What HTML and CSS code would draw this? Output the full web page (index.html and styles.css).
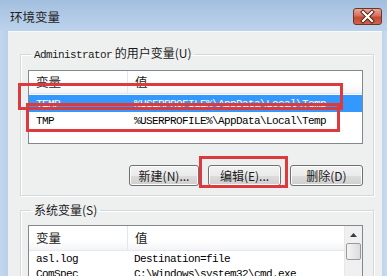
FILE: index.html
```html
<!DOCTYPE html>
<html lang="zh">
<head>
    <meta charset="UTF-8" />
    <title>环境变量</title>
    <link rel="stylesheet" href="styles.css">
</head>
<body>
    <div class="okno">
        <div class="pasek">
            <span class="tytul">环境变量</span>
            <span class="zamknij">
                <svg width="29" height="17" viewBox="0 0 29 17">
                    <path d="M10 4 L19 13 M19 4 L10 13" stroke="#4a1d16" stroke-width="4" stroke-linecap="square"/>
                    <path d="M10 4 L19 13 M19 4 L10 13" stroke="#ffffff" stroke-width="2.2" stroke-linecap="square"/>
                </svg>
            </span>
        </div>

        <div class="klient">
            <fieldset class="grupa grupa-user">
                <legend><span class="mono">Administrator</span> 的用户变量(U)</legend>
                <div class="lista lista-user">
                    <div class="wiersz naglowek">
                        <div class="kol1">变量</div>
                        <div class="kol2">值</div>
                    </div>
                    <div class="wiersz dane zaznaczony">
                        <div class="kol1 mono">TEMP</div>
                        <div class="kol2 mono">%USERPROFILE%\AppData\Local\Temp</div>
                    </div>
                    <div class="wiersz dane">
                        <div class="kol1 mono">TMP</div>
                        <div class="kol2 mono">%USERPROFILE%\AppData\Local\Temp</div>
                    </div>
                </div>
                <div class="przyciski">
                    <button class="przycisk p-nowy">新建(N)...</button>
                    <button class="przycisk p-edytuj">编辑(E)...</button>
                    <button class="przycisk p-usun">删除(D)</button>
                </div>
            </fieldset>

            <fieldset class="grupa grupa-sys">
                <legend>系统变量(S)</legend>
                <div class="lista lista-sys">
                    <div class="tresc">
                        <div class="wiersz naglowek">
                            <div class="kol1">变量</div>
                            <div class="kol2">值</div>
                        </div>
                        <div class="wiersz dane">
                            <div class="kol1 mono">asl.log</div>
                            <div class="kol2 mono">Destination=file</div>
                        </div>
                        <div class="wiersz dane">
                            <div class="kol1 mono">ComSpec</div>
                            <div class="kol2 mono">C:\Windows\system32\cmd.exe</div>
                        </div>
                    </div>
                    <div class="suwak">
                        <div class="strzalka">
                            <svg width="7" height="4" viewBox="0 0 7 4"><path d="M0 4 L3.5 0 L7 4 Z" fill="#3b3b3b"/></svg>
                        </div>
                        <div class="uchwyt"></div>
                    </div>
                </div>
            </fieldset>
        </div>

        <!-- czerwone ramki -->
        <div class="ramka ramka-1"></div>
        <div class="ramka ramka-2"></div>
        <div class="ramka ramka-3"></div>
    </div>
</body>
</html>
```

FILE: styles.css
```css
body {
    margin: 0;
    font-family: "Noto Sans CJK SC", sans-serif;
    font-size: 12px;
    color: #1a1a1a;
    background-color: #b9d1ea;
}

.okno {
    position: relative;
    width: 387px;
    height: 276px;
    overflow: hidden;
    background: linear-gradient(to right, #c3d7ee 0, #b9d0ea 8px, #b9d0ea 379px, #c8dbef 387px);
}

.pasek {
    height: 31px;
    position: relative;
    background: linear-gradient(to bottom, #a3bfdf 0, #b4cce7 20px, #bdd3ec 31px);
}

.tytul {
    position: absolute;
    left: 10px;
    top: 8px;
    font-size: 12.5px;
    line-height: 17px;
    color: #1e1e1e;
}

.zamknij {
    position: absolute;
    left: 353px;
    top: 8px;
    width: 29px;
    height: 17px;
    box-sizing: border-box;
    border: 1px solid #6e3429;
    border-radius: 3px;
    background: linear-gradient(to bottom, #e8a898 0, #d5705d 45%, #c34a32 55%, #d0634a 100%);
    display: flex;
    align-items: center;
    justify-content: center;
}

.zamknij svg {
    margin: -1px;
}

.klient {
    margin: 0 5px 0 8px;
    height: 245px;
    background-color: #eef0f0;
    padding-top: 13px;
    box-sizing: border-box;
    border-top: 1px solid #f8fafc;
}

.mono {
    font-family: "Liberation Mono", monospace;
    font-size: 11px;
    letter-spacing: -0.6px;
}

.grupa {
    margin: 0 8px 0 12px;
    padding: 0 10px 9px 7px;
    border: 1px solid #d5d9dc;
    box-shadow: inset 1px 1px 0 #ffffff, 1px 1px 0 #ffffff;
    min-width: 0;
}

.grupa legend {
    padding: 0 3px;
    margin-left: 3px;
    line-height: 16px;
    color: #1a1a1a;
}

.grupa-user legend {
    margin-top: -1px;
}

.grupa-sys {
    margin-top: 6px;
}

.lista {
    margin-top: 7px;
    border: 1px solid #828790;
    background-color: #ffffff;
}

.lista-user {
    height: 72px;
}

.lista-sys {
    height: 60px;
    display: flex;
}

.tresc {
    flex: 1;
}

.wiersz {
    display: flex;
    align-items: center;
}

.naglowek {
    height: 22px;
    line-height: 22px;
    font-size: 12.5px;
    background: linear-gradient(to bottom, #ffffff 0, #ffffff 60%, #f3f4f6 100%);
    border-bottom: 1px solid #e5e8ec;
}

.lista-sys .naglowek {
    height: 24px;
    line-height: 24px;
}

.kol1 {
    width: 91px;
    padding-left: 7px;
    flex-shrink: 0;
}

.naglowek .kol1 {
    border-right: 1px solid #e3e6ea;
}

.kol2 {
    padding-left: 7px;
    white-space: nowrap;
}

.dane {
    height: 17px;
    color: #000000;
}

.lista-sys .dane {
    height: 15px;
}

.lista-user .naglowek {
    margin-bottom: 1px;
}

.zaznaczony {
    background-color: #3399ff;
    color: #ffffff;
}

.suwak {
    width: 17px;
    background-color: #f0f0f0;
    border-left: 1px solid #e8e8e8;
    display: flex;
    flex-direction: column;
    align-items: center;
}

.strzalka {
    height: 17px;
    width: 100%;
    display: flex;
    align-items: center;
    justify-content: center;
}

.uchwyt {
    width: 15px;
    height: 17px;
    box-sizing: border-box;
    border: 1px solid #9a9a9a;
    border-radius: 2px;
    background: linear-gradient(to right, #f4f4f4, #dcdcdc);
}

.przyciski {
    display: flex;
    justify-content: flex-end;
    gap: 9px;
    margin-top: 21px;
}

.przycisk {
    height: 21px;
    padding: 0;
    font-family: "Noto Sans CJK SC", sans-serif;
    font-size: 12px;
    color: #1a1a1a;
    border: 1px solid #707070;
    border-radius: 3px;
    background: linear-gradient(to bottom, #f2f2f2 0, #ebebeb 50%, #dddddd 51%, #cfcfcf 100%);
    box-shadow: inset 0 0 0 1px #fcfcfc;
}

.p-nowy { width: 70px; }
.p-edytuj { width: 73px; }
.p-usun { width: 73px; }

.ramka {
    position: absolute;
    border: 3px solid #dc3a3c;
    box-sizing: border-box;
}

.ramka-1 {
    left: 18px;
    top: 83px;
    width: 325px;
    height: 27px;
}

.ramka-2 {
    left: 26px;
    top: 103px;
    width: 314px;
    height: 29px;
}

.ramka-3 {
    left: 199px;
    top: 156px;
    width: 89px;
    height: 32px;
}
```
